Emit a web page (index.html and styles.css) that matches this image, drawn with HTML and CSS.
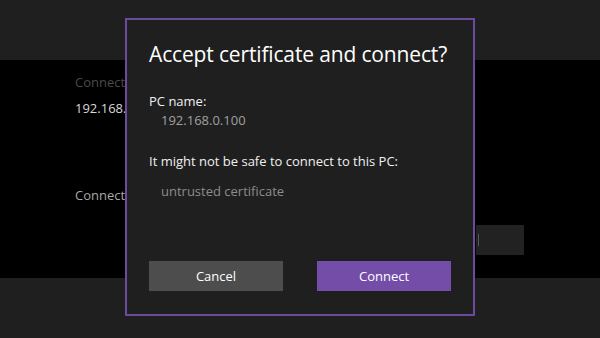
FILE: index.html
```html
<!DOCTYPE html>
<html lang="en">
<head>
  <meta charset="UTF-8">
  <title>Accept certificate</title>
  <link rel="stylesheet" href="styles.css">
</head>
<body>
  <div class="page">
    <div class="top-bar"></div>
    <div class="content">
      <div class="setting">
        <div class="setting-label dim">Connect</div>
        <div class="setting-value">192.168.0.100</div>
      </div>
      <div class="setting second">
        <div class="setting-label">Connect</div>
      </div>
      <div class="side-button"><span class="caret"></span></div>
    </div>
    <div class="bottom-bar"></div>
  </div>

  <div class="dialog">
    <h1 class="dialog-title">Accept certificate and connect?</h1>
    <div class="field-label">PC name:</div>
    <div class="field-value">192.168.0.100</div>
    <div class="field-label warn">It might not be safe to connect to this PC:</div>
    <div class="field-value reason">untrusted certificate</div>
    <div class="actions">
      <button class="btn btn-cancel">Cancel</button>
      <button class="btn btn-connect">Connect</button>
    </div>
  </div>
</body>
</html>
```

FILE: styles.css
```css
body, html {
  height: 100%;
  margin: 0;
  font-family: "Open Sans", "Noto Sans", sans-serif;
  background-color: #000;
  color: #fff;
}

.page {
  height: 338px;
  display: flex;
  flex-direction: column;
}

.top-bar,
.bottom-bar {
  height: 60px;
  background-color: #1f1f1f;
}

.content {
  flex: 1;
  position: relative;
  background-color: #000;
  padding: 12px 0 0 75px;
}

/* the dialog covers everything right of x=125 */
.setting {
  width: 50px;
  overflow: hidden;
  white-space: nowrap;
}

.setting-label {
  font-size: 13px;
  color: #a8a8a8;
  line-height: 20px;
}

.setting-label.dim {
  color: #4a4a4a;
}

.setting-value {
  font-size: 13px;
  color: #d8d8d8;
  line-height: 20px;
  margin-top: 6px;
}

.setting.second {
  margin-top: 67px;
}

.side-button {
  position: absolute;
  left: 476px;
  top: 165px;
  width: 48px;
  height: 30px;
  background-color: #222;
}

.caret {
  position: absolute;
  left: 2px;
  top: 9px;
  width: 1px;
  height: 12px;
  background-color: #555;
}

.dialog {
  position: absolute;
  left: 125px;
  top: 18px;
  box-sizing: border-box;
  width: 350px;
  height: 298px;
  border: 2px solid #6c4a9f;
  background-color: #1f1f1f;
  padding: 0 22px;
}

.dialog-title {
  margin: 19px 0 0 0;
  font-size: 21px;
  font-weight: normal;
  line-height: 30px;
  color: #fff;
  letter-spacing: -0.15px;
}

.field-label {
  font-size: 13px;
  line-height: 16px;
  color: #f0f0f0;
  margin-top: 24px;
}

.field-label.warn {
  margin-top: 25px;
}

.field-value {
  font-size: 13px;
  line-height: 16px;
  color: #a0a0a0;
  padding-left: 12px;
  margin-top: 3px;
}

.field-value.reason {
  margin-top: 14px;
  color: #8c8c8c;
}

.actions {
  display: flex;
  justify-content: space-between;
  margin-top: 62px;
}

.btn {
  width: 134px;
  height: 30px;
  border: none;
  font-family: inherit;
  font-size: 13px;
  color: #fff;
  padding: 0;
}

.btn-cancel {
  background-color: #4d4d4d;
}

.btn-connect {
  background-color: #744da9;
}
```
